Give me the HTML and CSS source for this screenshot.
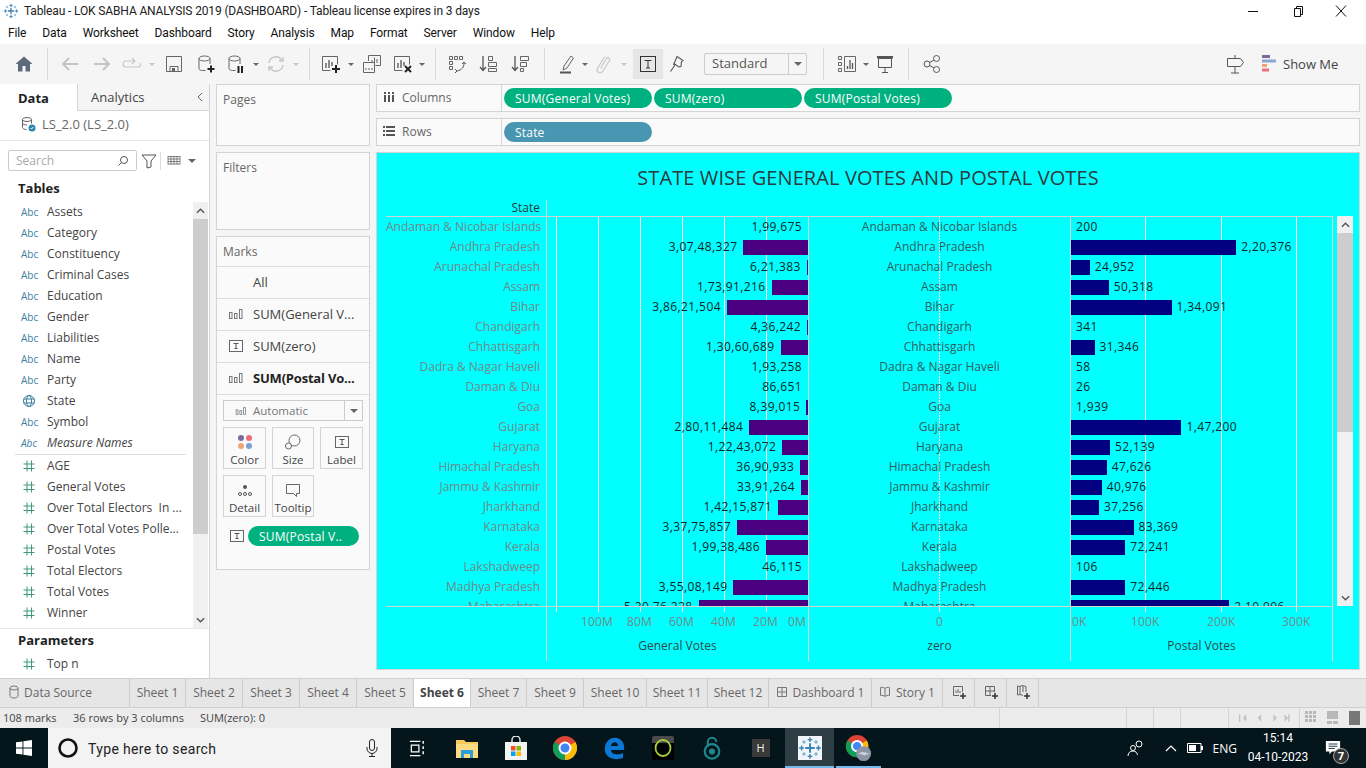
FILE: index.html
```html
<!DOCTYPE html>
<html lang="en">
<head>
    <meta charset="UTF-8">
    <meta name="viewport" content="width=device-width, initial-scale=1.0">
    <title>Tableau - LOK SABHA ANALYSIS 2019 (DASHBOARD)</title>
    <link rel="stylesheet" href="styles.css">
</head>
<body>
    <svg class="defs" aria-hidden="true">
        <symbol id="i-logo" viewBox="0 0 20 20">
            <g stroke="#3b83b5" stroke-width="1.2" fill="none">
                <path d="M10 6v8M6 10h8" stroke-width="1.6"/>
                <path d="M10 1v4M8 3h4M10 15v4M8 17h4M1 10h4M3 8v4M15 10h4M17 8v4"/>
                <path d="M5 3.5v3M3.5 5h3M15 3.5v3M13.500 5h3M5 13.500v3M3.500 15h3M15 13.500v3M13.500 15h3" stroke="#7fb2d4"/>
            </g>
        </symbol>
        <symbol id="i-hash" viewBox="0 0 14 14">
            <path d="M5 1.500v11M9.500 1.500v11M1.500 5h11M1.500 9.500h11" stroke="#3c9a7b" stroke-width="1" fill="none"/>
        </symbol>
        <symbol id="i-globe" viewBox="0 0 14 14">
            <g stroke="#3c7f9f" fill="none">
                <circle cx="7" cy="7" r="5.500"/>
                <ellipse cx="7" cy="7" rx="2.500" ry="5.500"/>
                <path d="M1.500 5h11M1.500 9h11"/>
            </g>
        </symbol>
        <symbol id="i-bars" viewBox="0 0 16 14">
            <g fill="none" stroke="#777">
                <rect x="1.500" y="5.500" width="2.500" height="6"/>
                <rect x="6.500" y="6.500" width="2.500" height="5"/>
                <rect x="11.500" y="2.500" width="2.500" height="9"/>
            </g>
        </symbol>
        <symbol id="i-textbox" viewBox="0 0 16 14">
            <rect x="1.500" y="1.500" width="13" height="11" fill="none" stroke="#666"/>
            <path d="M5.500 4.500h5M8 4.500v5M6.500 9.500h3" stroke="#555" fill="none"/>
        </symbol>
    </svg>

    <div class="titlebar">
        <svg class="title-logo"><use href="#i-logo"></use></svg>
        <span class="title-text">Tableau - LOK SABHA ANALYSIS 2019 (DASHBOARD) - Tableau license expires in 3 days</span>
        <div class="win-btns">
            <svg class="win-btn" viewBox="0 0 12 12"><path d="M1 6.500h10" stroke="#111"/></svg>
            <svg class="win-btn" viewBox="0 0 12 12"><path d="M3.500 3.500h6v8h-6zM5.500 3.500v-2h6v8h-2" fill="none" stroke="#111"/></svg>
            <svg class="win-btn" viewBox="0 0 12 12"><path d="M1 .5l10 11M11 .5L1 11.500" stroke="#111" fill="none"/></svg>
        </div>
    </div>

    <div class="menubar">
        <span>File</span><span>Data</span><span>Worksheet</span><span>Dashboard</span><span>Story</span><span>Analysis</span><span>Map</span><span>Format</span><span>Server</span><span>Window</span><span>Help</span>
    </div>

    <div class="toolbar">
        <div class="tb w32 ml8"><svg viewBox="0 0 20 20"><path d="M1.500 10L10 2.500 18.500 10H16v7.500h-4.500V12h-3v5.500H4V10z" fill="#5d6a7a"/></svg></div>
        <i class="tb-sep ml7"></i>
        <div class="tb w32 ml6"><svg viewBox="0 0 20 20"><path d="M18 10H3M9 4l-6 6 6 6" fill="none" stroke="#c4c4c4" stroke-width="2"/></svg></div>
        <div class="tb w32"><svg viewBox="0 0 20 20"><path d="M2 10h15M11 4l6 6-6 6" fill="none" stroke="#c4c4c4" stroke-width="2"/></svg></div>
        <div class="tb w28"><svg viewBox="0 0 20 20"><path d="M12 7H4a2.500 2.500 0 0 0 0 6h12a2.500 2.500 0 0 0 2-4M10 4l3 3-3 3" fill="none" stroke="#c8c8c8" stroke-width="1.200"/></svg></div>
        <div class="tb-arrow off"></div>
        <div class="tb w32"><svg viewBox="0 0 20 20"><path d="M2.500 2.500h15v15h-15zM6 17.500v-5h8v5" fill="none" stroke="#666"/><rect x="8" y="14" width="3" height="3" fill="#666"/></svg></div>
        <div class="tb w32"><svg viewBox="0 0 20 20"><path d="M3 4.500v10c0 1.500 2 2 3.500 2h3M14 4.500V10" fill="none" stroke="#666"/><ellipse cx="8.500" cy="4.500" rx="5.500" ry="2.500" fill="none" stroke="#666"/><path d="M15 11.500v7M11.500 15h7" stroke="#222" stroke-width="2"/></svg></div>
        <div class="tb w28"><svg viewBox="0 0 20 20"><path d="M3 4.500v10c0 1.500 2 2 3.500 2h3M14 4.500V10" fill="none" stroke="#666"/><ellipse cx="8.500" cy="4.500" rx="5.500" ry="2.500" fill="none" stroke="#666"/><path d="M12.500 12v7M16 12v7" stroke="#222" stroke-width="2"/></svg></div>
        <div class="tb-arrow"></div>
        <div class="tb w28"><svg viewBox="0 0 20 20"><path d="M3 9a7 7 0 0 1 12-4l2 2M17 11a7 7 0 0 1-12 4l-2-2M17 3v4h-4M3 17v-4h4" fill="none" stroke="#c4c4c4" stroke-width="1.300"/></svg></div>
        <div class="tb-arrow off"></div>
        <i class="tb-sep ml7"></i>
        <div class="tb w30 ml6"><svg viewBox="0 0 20 20"><path d="M9.500 16.500h-8v-14h15v8" fill="none" stroke="#666"/><path d="M5 14V9M8 14V6M11 12V8" stroke="#555" stroke-width="1.300"/><path d="M15 11v8M11 15h8" stroke="#222" stroke-width="2"/></svg></div>
        <div class="tb-arrow w10"></div>
        <div class="tb w32"><svg viewBox="0 0 20 20"><path d="M6.500 7V1.500h12v10h-5M1.500 8.500h11v10h-11z" fill="none" stroke="#666"/><path d="M10 9V6M12.500 9V3.500M15 9V5M4 16v-2M7 16v-2M10 16v-2" stroke="#666"/></svg></div>
        <div class="tb w29"><svg viewBox="0 0 20 20"><path d="M9.500 16.500h-8v-14h15v8" fill="none" stroke="#666"/><path d="M5 14V9M8 14V6M11 12V8" stroke="#555" stroke-width="1.300"/><path d="M12 12l6 6M18 12l-6 6" stroke="#222" stroke-width="2"/></svg></div>
        <div class="tb-arrow w10"></div>
        <i class="tb-sep ml8"></i>
        <div class="tb w30 ml6"><svg viewBox="0 0 20 20"><path d="M2.500 2.500h3v3h-3zM7.500 2.500h3v3h-3zM12.500 2.500h3v3h-3zM2.500 7.500h3v3h-3zM2.500 12.500h3v3h-3z" fill="none" stroke="#666"/><path d="M17 9c0 4-2 7-7 8M8 15l2 2-2 2M15 10l2-2 2 2" fill="none" stroke="#555"/></svg></div>
        <div class="tb w32"><svg viewBox="0 0 20 20"><path d="M5 2v14M2 13l3 3.500L8 13" fill="none" stroke="#555" stroke-width="1.300"/><path d="M10.500 2.500h4v4h-4zM10.500 8.500h8v4h-8zM10.500 14.500h8v3h-8z" fill="none" stroke="#666"/></svg></div>
        <div class="tb w32"><svg viewBox="0 0 20 20"><path d="M5 2v14M2 13l3 3.500L8 13" fill="none" stroke="#555" stroke-width="1.300"/><path d="M10.500 2.500h8v4h-8zM10.500 8.500h6v4h-6zM10.500 14.500h3v3h-3z" fill="none" stroke="#666"/></svg></div>
        <i class="tb-sep ml8"></i>
        <div class="tb w28 ml8"><svg viewBox="0 0 20 20"><path d="M7 12L14 2l2.500 2L10 14l-4 2z" fill="none" stroke="#666"/><path d="M3 18.500h11" stroke="#555" stroke-width="2"/></svg></div>
        <div class="tb-arrow w8"></div>
        <div class="tb w30"><svg viewBox="0 0 20 20"><path d="M6.500 14.500l6-10a1.800 1.800 0 0 1 3.100 1.800l-6.800 11a3 3 0 0 1-5.200-3l7-11.500" fill="none" stroke="#c4c4c4" stroke-width="1.100"/></svg></div>
        <div class="tb-arrow off w10"></div>
        <div class="tb tb-on ml4"><svg viewBox="0 0 20 20"><rect x="2.500" y="2.500" width="15" height="15" fill="none" stroke="#333"/><path d="M6.500 6.500h7M10 6.500v7.500M8 14h4" stroke="#333" fill="none"/></svg></div>
        <div class="tb w28"><svg viewBox="0 0 20 20"><path d="M10 2.500l6 4-1.500 1-.5 5-2 .5-5-3.500-.5 1.500zM8 11l-4.500 6.500" fill="none" stroke="#555" stroke-width="1.100"/></svg></div>
        <div class="fit-select">
            <span class="fit-label">Standard</span>
            <div class="fit-arrow"><i class="caret"></i></div>
        </div>
        <i class="tb-sep ml16"></i>
        <div class="tb w30 ml8"><svg viewBox="0 0 20 20"><path d="M1.500 2.500h3v3h-3zM1.500 8.500h3v3h-3zM1.500 14.500h3v3h-3zM7.500 2.500h11v15h-11z" fill="none" stroke="#666"/><path d="M10.500 15v-3M13 15V6M15.500 15V9" stroke="#555" stroke-width="1.300"/></svg></div>
        <div class="tb-arrow w8"></div>
        <div class="tb w30"><svg viewBox="0 0 20 20"><path d="M3.500 4.500h13v9h-13zM2 2.500h16M10 13.500v5M7 18.500h6" fill="none" stroke="#555"/><path d="M2 3.500h16" stroke="#555" stroke-width="2"/></svg></div>
        <i class="tb-sep ml8"></i>
        <div class="tb w28 ml9"><svg viewBox="0 0 20 20"><circle cx="5" cy="10" r="3" fill="none" stroke="#555"/><circle cx="14.500" cy="4.500" r="3" fill="none" stroke="#555"/><circle cx="14.500" cy="15.500" r="3" fill="none" stroke="#555"/><path d="M7.500 8.500l4.500-2.500M7.500 11.500l4.500 2.500" stroke="#555"/></svg></div>
        <div class="tb-right">
            <div class="tb w32"><svg viewBox="0 0 20 20"><path d="M10 1v3M10 13v6M6 19h8M2.500 4.500h13l3 4-3 4h-13z" fill="none" stroke="#555"/></svg></div>
            <div class="showme">
                <svg class="showme-icon" viewBox="0 0 14 18">
                    <rect x="0" y="0" width="8" height="3" fill="#7b6a9c"/>
                    <rect x="0" y="4.500" width="14" height="3" fill="#8ba7d1"/>
                    <rect x="0" y="9" width="5" height="3" fill="#f0a474"/>
                    <rect x="0" y="13.500" width="7" height="3" fill="#f06d7c"/>
                </svg>
                <span>Show Me</span>
            </div>
        </div>
    </div>

    <div class="main">
        <aside class="data-pane">
            <div class="pane-tabs">
                <div class="pane-tab active">Data</div>
                <div class="pane-tab">Analytics<svg class="collapse" viewBox="0 0 6 10"><path d="M5 1L1 5l4 4" fill="none" stroke="#666"/></svg></div>
            </div>
            <div class="source-row">
                <svg class="source-icon" viewBox="0 0 16 16">
                    <ellipse cx="7" cy="3.500" rx="4.500" ry="2" fill="none" stroke="#666"/>
                    <path d="M2.500 3.500v8c0 1 2 2 4 2M11.500 3.500v4M2.500 7c0 1 2 2 4.500 2" fill="none" stroke="#666"/>
                    <circle cx="12" cy="12" r="3.500" fill="#2a86ac"/>
                    <path d="M10.500 12l1 1 2-2" stroke="#fff" fill="none"/>
                </svg>
                <span>LS_2.0 (LS_2.0)</span>
            </div>
            <div class="search-row">
                <div class="search-box">
                    <span>Search</span>
                    <svg viewBox="0 0 12 12"><circle cx="7" cy="5" r="3.500" fill="none" stroke="#555"/><path d="M4.500 7.500L1.500 10.500" stroke="#555"/></svg>
                </div>
                <svg class="filter-icon" viewBox="0 0 16 16"><path d="M1 2h14l-5 6v6l-4 1V8z" fill="none" stroke="#555"/></svg>
                <i class="search-sep"></i>
                <svg class="list-icon" viewBox="0 0 14 12"><path d="M1 1.500h12M1 4h12M1 6.500h12M1 9h12M1 1v8.500M4 1v8.500M7 1v8.500M10 1v8.500M13 1v8.500" stroke="#666" stroke-width=".8" fill="none"/></svg>
                <i class="caret"></i>
            </div>
            <div class="section-head">Tables</div>
            <div class="field-scroll">
                <div class="field-list">
                    <div class="field"><span class="abc">Abc</span>Assets</div>
                    <div class="field"><span class="abc">Abc</span>Category</div>
                    <div class="field"><span class="abc">Abc</span>Constituency</div>
                    <div class="field"><span class="abc">Abc</span>Criminal Cases</div>
                    <div class="field"><span class="abc">Abc</span>Education</div>
                    <div class="field"><span class="abc">Abc</span>Gender</div>
                    <div class="field"><span class="abc">Abc</span>Liabilities</div>
                    <div class="field"><span class="abc">Abc</span>Name</div>
                    <div class="field"><span class="abc">Abc</span>Party</div>
                    <div class="field"><span class="abc"><svg class="field-icon"><use href="#i-globe"></use></svg></span>State</div>
                    <div class="field"><span class="abc">Abc</span>Symbol</div>
                    <div class="field italic"><span class="abc">Abc</span>Measure Names</div>
                    <div class="field-rule"></div>
                    <div class="field"><span class="abc"><svg class="field-icon"><use href="#i-hash"></use></svg></span>AGE</div>
                    <div class="field"><span class="abc"><svg class="field-icon"><use href="#i-hash"></use></svg></span>General Votes</div>
                    <div class="field"><span class="abc"><svg class="field-icon"><use href="#i-hash"></use></svg></span>Over Total Electors&nbsp; In ...</div>
                    <div class="field"><span class="abc"><svg class="field-icon"><use href="#i-hash"></use></svg></span>Over Total Votes Polle...</div>
                    <div class="field"><span class="abc"><svg class="field-icon"><use href="#i-hash"></use></svg></span>Postal Votes</div>
                    <div class="field"><span class="abc"><svg class="field-icon"><use href="#i-hash"></use></svg></span>Total Electors</div>
                    <div class="field"><span class="abc"><svg class="field-icon"><use href="#i-hash"></use></svg></span>Total Votes</div>
                    <div class="field"><span class="abc"><svg class="field-icon"><use href="#i-hash"></use></svg></span>Winner</div>
                </div>
                <div class="scroll field-bar">
                    <div class="scroll-btn"><svg viewBox="0 0 10 6"><path d="M1 5l4-4 4 4" fill="none" stroke="#555" stroke-width="1.600"/></svg></div>
                    <div class="scroll-thumb"></div>
                    <div class="scroll-btn end"><svg viewBox="0 0 10 6"><path d="M1 1l4 4 4-4" fill="none" stroke="#555" stroke-width="1.600"/></svg></div>
                </div>
            </div>
            <div class="section-head params">Parameters</div>
            <div class="field"><span class="abc"><svg class="field-icon"><use href="#i-hash"></use></svg></span>Top n</div>
        </aside>

        <div class="cards">
            <div class="card pages">Pages</div>
            <div class="card filters">Filters</div>
            <div class="card marks">
                <div class="marks-head">Marks</div>
                <div class="marks-row"><span class="marks-ic"></span>All</div>
                <div class="marks-row"><svg class="marks-ic"><use href="#i-bars"></use></svg>SUM(General V...</div>
                <div class="marks-row"><svg class="marks-ic"><use href="#i-textbox"></use></svg>SUM(zero)</div>
                <div class="marks-row bold"><svg class="marks-ic"><use href="#i-bars"></use></svg>SUM(Postal Vo...</div>
                <div class="marks-type">
                    <svg class="type-ic"><use href="#i-bars"></use></svg>
                    <span>Automatic</span>
                    <div class="type-arrow"><i class="caret"></i></div>
                </div>
                <div class="marks-grid">
                    <div class="mark-card">
                        <svg viewBox="0 0 16 16"><circle cx="4" cy="4" r="3" fill="#7b6a9c"/><circle cx="12" cy="4" r="3" fill="#ef6a7a"/><circle cx="4" cy="12" r="3" fill="#f0a474"/><circle cx="12" cy="12" r="3" fill="#7f9fd0"/></svg>
                        <span>Color</span>
                    </div>
                    <div class="mark-card">
                        <svg viewBox="0 0 16 16"><circle cx="9.500" cy="6.500" r="5.500" fill="none" stroke="#666"/><circle cx="3.500" cy="12" r="3" fill="#fafafa" stroke="#666"/></svg>
                        <span>Size</span>
                    </div>
                    <div class="mark-card">
                        <svg><use href="#i-textbox"></use></svg>
                        <span>Label</span>
                    </div>
                    <div class="mark-card">
                        <svg viewBox="0 0 16 16"><circle cx="8" cy="5" r="2" fill="#555"/><circle cx="3" cy="12" r="1.500" fill="none" stroke="#555"/><circle cx="8" cy="12" r="1.500" fill="none" stroke="#555"/><circle cx="13" cy="12" r="1.500" fill="none" stroke="#555"/></svg>
                        <span>Detail</span>
                    </div>
                    <div class="mark-card">
                        <svg viewBox="0 0 16 16"><path d="M1.500 2.500h13v9h-3v3l-3-3h-7z" fill="none" stroke="#666"/></svg>
                        <span>Tooltip</span>
                    </div>
                </div>
                <div class="marks-pill-row">
                    <svg class="pill-ic"><use href="#i-textbox"></use></svg>
                    <div class="pill pill-green pill-small">SUM(Postal V..</div>
                </div>
            </div>
        </div>

        <div class="work">
            <div class="shelf">
                <div class="shelf-label">
                    <svg viewBox="0 0 12 12"><path d="M2 1v10M6 1v10M10 1v10" stroke="#555" stroke-width="2" stroke-dasharray="2 1 9"/></svg>
                    <span>Columns</span>
                </div>
                <div class="shelf-pills">
                    <div class="pill pill-green">SUM(General Votes)</div>
                    <div class="pill pill-green">SUM(zero)</div>
                    <div class="pill pill-green">SUM(Postal Votes)</div>
                </div>
            </div>
            <div class="shelf">
                <div class="shelf-label">
                    <svg viewBox="0 0 12 12"><path d="M0 2h12M0 6h12M0 10h12" stroke="#555" stroke-width="2" stroke-dasharray="2 1 9"/></svg>
                    <span>Rows</span>
                </div>
                <div class="shelf-pills">
                    <div class="pill pill-blue">State</div>
                </div>
            </div>

            <div class="viz">
                <h1 class="viz-title">STATE WISE GENERAL VOTES AND POSTAL VOTES</h1>
                <div class="viz-head"><div class="state head-state">State</div></div>
                <div class="viz-body">
                    <div class="rows">
                        <div class="row"><div class="state">Andaman &amp; Nicobar Islands</div><div class="gen"><span class="bar bar-gen" style="width:0px"></span><span class="val">1,99,675</span></div><div class="zero">Andaman &amp; Nicobar Islands</div><div class="post"><span class="bar bar-post" style="width:0px"></span><span class="val">200</span></div></div>
                        <div class="row"><div class="state">Andhra Pradesh</div><div class="gen"><span class="bar bar-gen" style="width:64.6px"></span><span class="val">3,07,48,327</span></div><div class="zero">Andhra Pradesh</div><div class="post"><span class="bar bar-post" style="width:165.3px"></span><span class="val">2,20,376</span></div></div>
                        <div class="row"><div class="state">Arunachal Pradesh</div><div class="gen"><span class="bar bar-gen" style="width:1.3px"></span><span class="val">6,21,383</span></div><div class="zero">Arunachal Pradesh</div><div class="post"><span class="bar bar-post" style="width:18.7px"></span><span class="val">24,952</span></div></div>
                        <div class="row"><div class="state">Assam</div><div class="gen"><span class="bar bar-gen" style="width:36.5px"></span><span class="val">1,73,91,216</span></div><div class="zero">Assam</div><div class="post"><span class="bar bar-post" style="width:37.7px"></span><span class="val">50,318</span></div></div>
                        <div class="row"><div class="state">Bihar</div><div class="gen"><span class="bar bar-gen" style="width:81.1px"></span><span class="val">3,86,21,504</span></div><div class="zero">Bihar</div><div class="post"><span class="bar bar-post" style="width:100.6px"></span><span class="val">1,34,091</span></div></div>
                        <div class="row"><div class="state">Chandigarh</div><div class="gen"><span class="bar bar-gen" style="width:0.9px"></span><span class="val">4,36,242</span></div><div class="zero">Chandigarh</div><div class="post"><span class="bar bar-post" style="width:0px"></span><span class="val">341</span></div></div>
                        <div class="row"><div class="state">Chhattisgarh</div><div class="gen"><span class="bar bar-gen" style="width:27.4px"></span><span class="val">1,30,60,689</span></div><div class="zero">Chhattisgarh</div><div class="post"><span class="bar bar-post" style="width:23.5px"></span><span class="val">31,346</span></div></div>
                        <div class="row"><div class="state">Dadra &amp; Nagar Haveli</div><div class="gen"><span class="bar bar-gen" style="width:0px"></span><span class="val">1,93,258</span></div><div class="zero">Dadra &amp; Nagar Haveli</div><div class="post"><span class="bar bar-post" style="width:0px"></span><span class="val">58</span></div></div>
                        <div class="row"><div class="state">Daman &amp; Diu</div><div class="gen"><span class="bar bar-gen" style="width:0px"></span><span class="val">86,651</span></div><div class="zero">Daman &amp; Diu</div><div class="post"><span class="bar bar-post" style="width:0px"></span><span class="val">26</span></div></div>
                        <div class="row"><div class="state">Goa</div><div class="gen"><span class="bar bar-gen" style="width:1.8px"></span><span class="val">8,39,015</span></div><div class="zero">Goa</div><div class="post"><span class="bar bar-post" style="width:0px"></span><span class="val">1,939</span></div></div>
                        <div class="row"><div class="state">Gujarat</div><div class="gen"><span class="bar bar-gen" style="width:58.8px"></span><span class="val">2,80,11,484</span></div><div class="zero">Gujarat</div><div class="post"><span class="bar bar-post" style="width:110.4px"></span><span class="val">1,47,200</span></div></div>
                        <div class="row"><div class="state">Haryana</div><div class="gen"><span class="bar bar-gen" style="width:25.7px"></span><span class="val">1,22,43,072</span></div><div class="zero">Haryana</div><div class="post"><span class="bar bar-post" style="width:39.1px"></span><span class="val">52,139</span></div></div>
                        <div class="row"><div class="state">Himachal Pradesh</div><div class="gen"><span class="bar bar-gen" style="width:7.8px"></span><span class="val">36,90,933</span></div><div class="zero">Himachal Pradesh</div><div class="post"><span class="bar bar-post" style="width:35.7px"></span><span class="val">47,626</span></div></div>
                        <div class="row"><div class="state">Jammu &amp; Kashmir</div><div class="gen"><span class="bar bar-gen" style="width:7.1px"></span><span class="val">33,91,264</span></div><div class="zero">Jammu &amp; Kashmir</div><div class="post"><span class="bar bar-post" style="width:30.7px"></span><span class="val">40,976</span></div></div>
                        <div class="row"><div class="state">Jharkhand</div><div class="gen"><span class="bar bar-gen" style="width:29.9px"></span><span class="val">1,42,15,871</span></div><div class="zero">Jharkhand</div><div class="post"><span class="bar bar-post" style="width:27.9px"></span><span class="val">37,256</span></div></div>
                        <div class="row"><div class="state">Karnataka</div><div class="gen"><span class="bar bar-gen" style="width:70.9px"></span><span class="val">3,37,75,857</span></div><div class="zero">Karnataka</div><div class="post"><span class="bar bar-post" style="width:62.5px"></span><span class="val">83,369</span></div></div>
                        <div class="row"><div class="state">Kerala</div><div class="gen"><span class="bar bar-gen" style="width:41.9px"></span><span class="val">1,99,38,486</span></div><div class="zero">Kerala</div><div class="post"><span class="bar bar-post" style="width:54.2px"></span><span class="val">72,241</span></div></div>
                        <div class="row"><div class="state">Lakshadweep</div><div class="gen"><span class="bar bar-gen" style="width:0px"></span><span class="val">46,115</span></div><div class="zero">Lakshadweep</div><div class="post"><span class="bar bar-post" style="width:0px"></span><span class="val">106</span></div></div>
                        <div class="row"><div class="state">Madhya Pradesh</div><div class="gen"><span class="bar bar-gen" style="width:74.6px"></span><span class="val">3,55,08,149</span></div><div class="zero">Madhya Pradesh</div><div class="post"><span class="bar bar-post" style="width:54.3px"></span><span class="val">72,446</span></div></div>
                        <div class="row"><div class="state">Maharashtra</div><div class="gen"><span class="bar bar-gen" style="width:109.4px"></span><span class="val">5,20,76,228</span></div><div class="zero">Maharashtra</div><div class="post"><span class="bar bar-post" style="width:158.2px"></span><span class="val">2,10,996</span></div></div>
                    </div>
                    <div class="scroll viz-bar">
                        <div class="scroll-btn"><svg viewBox="0 0 10 6"><path d="M1 5l4-4 4 4" fill="none" stroke="#555" stroke-width="1.600"/></svg></div>
                        <div class="scroll-thumb"></div>
                        <div class="scroll-btn end"><svg viewBox="0 0 10 6"><path d="M1 1l4 4 4-4" fill="none" stroke="#555" stroke-width="1.600"/></svg></div>
                    </div>
                </div>
                <div class="viz-axis">
                    <div class="axis-blank"></div>
                    <div class="axis-cell gen-axis">
                        <span>100M</span><span>80M</span><span>60M</span><span>40M</span><span>20M</span><span>0M</span>
                        <b>General Votes</b>
                    </div>
                    <div class="axis-cell zero-axis">
                        <span>0</span>
                        <b>zero</b>
                    </div>
                    <div class="axis-cell post-axis">
                        <span>0K</span><span>100K</span><span>200K</span><span>300K</span>
                        <b>Postal Votes</b>
                    </div>
                </div>
            </div>
        </div>
    </div>

    <div class="tabs">
        <div class="tab tab-source">
            <svg viewBox="0 0 10 14"><ellipse cx="5" cy="3" rx="4" ry="2" fill="none" stroke="#777"/><path d="M1 3v8c0 1 2 2 4 2s4-1 4-2V3" fill="none" stroke="#777"/></svg>
            Data Source
        </div>
        <div class="tab w56">Sheet 1</div>
        <div class="tab w57">Sheet 2</div>
        <div class="tab w57">Sheet 3</div>
        <div class="tab w57">Sheet 4</div>
        <div class="tab w57">Sheet 5</div>
        <div class="tab w57 tab-on">Sheet 6</div>
        <div class="tab w56">Sheet 7</div>
        <div class="tab w57">Sheet 9</div>
        <div class="tab w63">Sheet 10</div>
        <div class="tab w61">Sheet 11</div>
        <div class="tab w61">Sheet 12</div>
        <div class="tab w103">
            <svg viewBox="0 0 12 12"><path d="M1.500 1.500h9v9h-9zM6 1.500v9M1.500 6h9" fill="none" stroke="#777"/></svg>
            Dashboard 1
        </div>
        <div class="tab w71">
            <svg viewBox="0 0 12 12"><path d="M6 2.500C5 1.500 3 1 1.500 1.500v8C3 9 5 9.500 6 10.500c1-1 3-1.500 4.500-1v-8C9 1 7 1.500 6 2.500zM6 2.500v8" fill="none" stroke="#777"/></svg>
            Story 1
        </div>
        <div class="tab w32 tab-add"><svg viewBox="0 0 16 16"><path d="M8 11.500H2.500v-9h9V8M5 9V6.500M7 9V5M9 9V7" fill="none" stroke="#666"/><path d="M12 9v6M9 12h6" stroke="#333" stroke-width="1.500"/></svg></div>
        <div class="tab w32 tab-add"><svg viewBox="0 0 16 16"><path d="M8 11.500H2.500v-9h9V8M7 2.500v9M2.500 7h9" fill="none" stroke="#666"/><path d="M12 9v6M9 12h6" stroke="#333" stroke-width="1.500"/></svg></div>
        <div class="tab w32 tab-add"><svg viewBox="0 0 16 16"><path d="M8 11.500l-3-1-2.500.5v-9l2.500.5 2-1 4 1V8M5 2v8.500M8 2v6" fill="none" stroke="#666"/><path d="M12 9v6M9 12h6" stroke="#333" stroke-width="1.500"/></svg></div>
    </div>

    <div class="status">
        <span class="stat-marks">108 marks</span>
        <span class="stat-rows">36 rows by 3 columns</span>
        <span class="stat-sum">SUM(zero): 0</span>
        <div class="stat-cells">
            <i class="cell c127"></i><i class="cell c27"></i><i class="cell c27"></i><i class="cell c48"></i>
            <div class="cell pager">
                <svg viewBox="0 0 56 10"><g fill="#c4c4c4"><path d="M5 5l4-4v8zM1 1h1.500v8H1zM21 5l4-4v8zM38 1l4 4-4 4zM54 5l-4-4v8zM54 1h1.500v8H54z"/></g></svg>
            </div>
            <div class="cell views">
                <svg viewBox="0 0 56 14">
                    <g fill="#b8b8b8"><rect x="0" y="0" width="3" height="3"/><rect x="4" y="0" width="3" height="3"/><rect x="8" y="0" width="3" height="3"/><rect x="0" y="4" width="3" height="3"/><rect x="4" y="4" width="3" height="3"/><rect x="8" y="4" width="3" height="3"/><rect x="0" y="8" width="3" height="3"/><rect x="4" y="8" width="3" height="3"/><rect x="8" y="8" width="3" height="3"/></g>
                    <rect x="22" y="0" width="11" height="8" fill="#b8b8b8"/><rect x="22" y="10" width="5" height="3" fill="#b8b8b8"/><rect x="28" y="10" width="5" height="3" fill="#b8b8b8"/>
                    <rect x="44" y="0" width="11" height="14" fill="#777"/>
                </svg>
            </div>
        </div>
    </div>

    <div class="taskbar">
        <div class="start"><svg viewBox="0 0 16 16"><path d="M0 2.300L6.500 1.400v6.200H0zM7.400 1.300L16 0v7.600H7.400zM0 8.400h6.500v6.200L0 13.700zM7.400 8.400H16V16l-8.600-1.300z" fill="#fff"/></svg></div>
        <div class="task-search">
            <svg class="cortana" viewBox="0 0 22 22"><circle cx="11" cy="11" r="8.500" fill="none" stroke="#111" stroke-width="2.600"/></svg>
            <span>Type here to search</span>
            <svg class="mic" viewBox="0 0 12 18"><rect x="3.500" y=".5" width="5" height="11" rx="2.500" fill="none" stroke="#222"/><path d="M1 8v1.500a5 5 0 0 0 10 0V8M6 14.500v3M3 17.500h6" fill="none" stroke="#222"/></svg>
        </div>
        <div class="task-app"><svg class="taskview" viewBox="0 0 20 20"><path d="M2 2.500h11M2 17.500h11M3.500 6.500h8v7h-8z" fill="none" stroke="#fff" stroke-width="1.300"/><path d="M16 2v3M16 7.500v3M16 13v3" stroke="#fff" stroke-width="1.500"/></svg></div>
        <div class="task-app"><svg viewBox="0 0 24 22"><path d="M1 3h8l2 2h12v16H1z" fill="#f6c95b"/><path d="M1 7h22v14H1z" fill="#fbdc84"/><path d="M6 21v-8h12v8h-3v-4H9v4z" fill="#2d9fd8"/></svg></div>
        <div class="task-app"><svg viewBox="0 0 22 24"><path d="M7 7V4a4 4 0 0 1 8 0v3" fill="none" stroke="#eee" stroke-width="1.400"/><rect x="0" y="6" width="22" height="18" fill="#f3f3f3"/><rect x="6" y="10" width="4.500" height="4.500" fill="#f25022"/><rect x="11.500" y="10" width="4.500" height="4.500" fill="#7fba00"/><rect x="6" y="15.500" width="4.500" height="4.500" fill="#00a4ef"/><rect x="11.500" y="15.500" width="4.500" height="4.500" fill="#ffb900"/></svg></div>
        <div class="task-app"><svg viewBox="0 0 24 24"><circle cx="12" cy="12" r="12" fill="#db4437"/><path d="M12 12L22.400 6A12 12 0 0 1 12 24z" fill="#fbbc05"/><path d="M12 12v12A12 12 0 0 1 1.600 6z" fill="#0f9d58"/><circle cx="12" cy="12" r="5.500" fill="#4285f4" stroke="#fff" stroke-width="2"/></svg></div>
        <div class="task-app"><svg viewBox="0 0 24 24"><path d="M3 11C4 4 10 1 15 2c5 1 8 6 7 12H9c0 4 6 6 12 3v5c-8 3-17 0-18-7-.5-1.500 0-3 0-4zm6-1h7c0-5-6-5-7 0z" fill="#0a78d4"/></svg></div>
        <div class="task-app"><svg class="ring-app" viewBox="0 0 22 24"><rect width="22" height="24" rx="2" fill="#000"/><path d="M0 2a2 2 0 0 1 2-2h18a2 2 0 0 1 2 2v5H0z" fill="#4a4a4a"/><ellipse cx="11" cy="12" rx="7.500" ry="8" fill="none" stroke="#a6ce39" stroke-width="1.800"/></svg></div>
        <div class="task-app"><svg viewBox="0 0 20 28"><path d="M5 12V7a5 5 0 0 1 10 0" fill="none" stroke="#1a8a93" stroke-width="2.200"/><circle cx="10" cy="18" r="8.500" fill="none" stroke="#1a8a93" stroke-width="2.500"/><circle cx="10" cy="18" r="3.500" fill="#1a8a93"/></svg></div>
        <div class="task-app"><div class="h-icon">H</div></div>
        <div class="task-app task-on underline"><svg class="tableau-tile" viewBox="0 0 20 20"><rect x="-1" y="-1" width="22" height="22" fill="#f2f6f8"/><use href="#i-logo" width="20" height="20"></use></svg></div>
        <div class="task-app underline chrome-two"><svg viewBox="0 0 30 30"><circle cx="13" cy="13" r="12" fill="#db4437"/><path d="M13 13L23.400 7A12 12 0 0 1 13 25z" fill="#fbbc05"/><path d="M13 13v12A12 12 0 0 1 2.600 7z" fill="#0f9d58"/><circle cx="13" cy="13" r="5.500" fill="#4285f4" stroke="#fff" stroke-width="2"/><circle cx="20" cy="21" r="8" fill="#8b95a6"/><path d="M14 21l5-2 7 2-5 2z" fill="#c9ced6"/></svg></div>
        <div class="tray">
            <svg class="tray-person" viewBox="0 0 18 18"><circle cx="12" cy="5" r="3" fill="none" stroke="#fff"/><circle cx="6" cy="9" r="2.500" fill="none" stroke="#fff"/><path d="M1 17c0-3 2-5 5-5s4 2 4.500 4" fill="none" stroke="#fff"/></svg>
            <svg class="tray-caret" viewBox="0 0 12 8"><path d="M1 7l5-5 5 5" fill="none" stroke="#fff" stroke-width="1.200"/></svg>
            <svg class="tray-batt" viewBox="0 0 16 10"><path d="M.5.5h13.500v9H.5z" fill="none" stroke="#fff"/><rect x="2" y="2" width="7" height="6" fill="#fff"/><rect x="14" y="3" width="2" height="4" fill="#fff"/></svg>
            <span class="tray-lang">ENG</span>
            <div class="clock"><span>15:14</span><span>04-10-2023</span></div>
            <div class="notify">
                <svg viewBox="0 0 18 18"><path d="M1 1h16v12H8l-3 3v-3H1z" fill="#fff"/><path d="M4 4.500h10M4 7h10M4 9.500h7" stroke="#123" stroke-width="1"/></svg>
                <span class="notify-badge">7</span>
            </div>
        </div>
    </div>
</body>
</html>
```

FILE: styles.css
```css
* {
    box-sizing: border-box;
}

html, body {
    margin: 0;
    padding: 0;
    height: 768px;
    overflow: hidden;
}

body {
    font-family: "Open Sans", "Noto Sans", sans-serif;
    font-size: 12px;
    color: #333;
    background-color: #f5f5f5;
    display: flex;
    flex-direction: column;
}

svg {
    display: block;
}

.defs {
    width: 0;
    height: 0;
    position: absolute;
}

/* window chrome */
.titlebar {
    height: 22px;
    background-color: #fff;
    display: flex;
    align-items: center;
    padding-left: 3px;
    color: #222;
}

.title-logo {
    width: 16px;
    height: 16px;
    margin-right: 5px;
}

.title-text {
    font-family: "Roboto", sans-serif;
    letter-spacing: -0.14px;
}

.win-btns {
    margin-left: auto;
    display: flex;
    align-items: center;
}

.win-btn {
    width: 12px;
    height: 12px;
    margin-right: 32px;
}

.win-btn:last-child {
    margin-right: 19px;
}

.menubar {
    height: 22px;
    background-color: #fff;
    display: flex;
    align-items: center;
    padding-left: 8px;
    gap: 16px;
    color: #111;
    font-family: "Roboto", sans-serif;
    letter-spacing: -0.12px;
}

/* toolbar */
.toolbar {
    height: 40px;
    background-color: #f5f5f5;
    display: flex;
    align-items: center;
}

.tb {
    height: 30px;
    display: flex;
    align-items: center;
    justify-content: center;
    flex: none;
}

.tb svg {
    width: 20px;
    height: 20px;
}

.tb-on {
    width: 30px;
    background-color: #e6e6e6;
}

.w28 { width: 28px; }
.w29 { width: 29px; }
.w30 { width: 30px; }
.w32 { width: 32px; }

.ml4 { margin-left: 4px; }
.ml6 { margin-left: 6px; }
.ml7 { margin-left: 7px; }
.ml8 { margin-left: 8px; }
.ml9 { margin-left: 9px; }
.ml16 { margin-left: 16px; }

.tb-sep {
    width: 1px;
    height: 32px;
    background-color: #d8d8d8;
    flex: none;
}

.tb-arrow {
    width: 12px;
    flex: none;
    display: flex;
    justify-content: center;
}

.tb-arrow.w10 { width: 10px; }
.tb-arrow.w8 { width: 8px; }

.tb-arrow::before {
    content: "";
    border-top: 3px solid #666;
    border-left: 3px solid transparent;
    border-right: 3px solid transparent;
}

.tb-arrow.off::before {
    border-top-color: #c4c4c4;
}

.caret {
    display: block;
    border-top: 4px solid #666;
    border-left: 4px solid transparent;
    border-right: 4px solid transparent;
}

.fit-select {
    width: 103px;
    height: 22px;
    margin-left: 13px;
    border: 1px solid #ccc;
    border-radius: 2px;
    display: flex;
    align-items: center;
    flex: none;
    color: #555;
    font-size: 13px;
}

.fit-label {
    flex: 1;
    padding: 0 0 2px 7px;
}

.fit-arrow {
    width: 18px;
    height: 100%;
    border-left: 1px solid #ccc;
    display: flex;
    align-items: center;
    justify-content: center;
}

.tb-right {
    margin-left: auto;
    display: flex;
    align-items: center;
}

.showme {
    display: flex;
    align-items: center;
    width: 115px;
    padding-left: 11px;
    font-size: 13px;
    color: #444;
}

.showme-icon {
    width: 14px;
    height: 18px;
    margin-right: 7px;
}

/* main area */
.main {
    height: 594px;
    display: flex;
}

.data-pane {
    width: 210px;
    background-color: #fff;
    border-right: 1px solid #d4d4d4;
    flex: none;
}

.pane-tabs {
    height: 27px;
    display: flex;
}

.pane-tab {
    display: flex;
    align-items: center;
    flex: 1;
    padding-left: 13px;
    font-size: 13px;
    color: #444;
    background-color: #f5f5f5;
    border-left: 1px solid #d4d4d4;
    border-bottom: 1px solid #d4d4d4;
    justify-content: space-between;
    padding-right: 6px;
}

.pane-tab.active {
    flex: none;
    width: 77px;
    padding-left: 18px;
    background-color: #fff;
    font-weight: 700;
    color: #222;
    border: 0;
}

.collapse {
    width: 6px;
    height: 10px;
}

.source-row {
    height: 30px;
    display: flex;
    align-items: center;
    padding: 0 0 3px 20px;
    gap: 6px;
    color: #666;
    font-size: 13px;
    border-bottom: 1px solid #e6e6e6;
}

.source-icon {
    width: 16px;
    height: 16px;
}

.search-row {
    height: 30px;
    padding: 9px 0 0 8px;
    display: flex;
    align-items: center;
}

.search-box {
    width: 129px;
    height: 21px;
    border: 1px solid #ccc;
    border-radius: 2px;
    padding: 0 7px;
    display: flex;
    align-items: center;
    justify-content: space-between;
    color: #aaa;
}

.search-box svg {
    width: 12px;
    height: 12px;
}

.filter-icon {
    width: 16px;
    height: 16px;
    margin-left: 4px;
}

.search-sep {
    width: 1px;
    height: 18px;
    margin-left: 3px;
    background-color: #ddd;
}

.list-icon {
    width: 14px;
    height: 12px;
    margin: 0 7px 0 6px;
}

.section-head {
    height: 31px;
    padding: 8px 0 0 18px;
    font-size: 13px;
    font-weight: 700;
    color: #222;
}

.field-scroll {
    height: 427px;
    display: flex;
    border-bottom: 1px solid #e6e6e6;
}

.field-list {
    width: 193px;
    margin-top: -1px;
}

.field {
    height: 21px;
    display: flex;
    align-items: center;
    color: #444;
}

.field.italic {
    font-style: italic;
}

.abc {
    width: 47px;
    padding-left: 21px;
    font-size: 10px;
    color: #3c7f9f;
    flex: none;
}

.field-icon {
    width: 14px;
    height: 14px;
    margin-left: 1px;
}

.field-rule {
    height: 1px;
    margin: 1px 0 0 15px;
    width: 171px;
    background-color: #ddd;
}

.params {
    height: 24px;
    padding-top: 2px;
}

.scroll {
    display: flex;
    flex-direction: column;
    background-color: #f0f0f0;
}

.field-bar {
    width: 15px;
    height: 426px;
}

.scroll-btn {
    height: 17px;
    display: flex;
    align-items: center;
    justify-content: center;
    flex: none;
}

.scroll-btn svg {
    width: 9px;
    height: 6px;
}

.scroll-btn.end {
    margin-top: auto;
}

.scroll-thumb {
    height: 315px;
    background-color: #cdcdcd;
}

/* shelves and cards */
.cards {
    width: 166px;
    padding: 0 6px;
    flex: none;
    display: flex;
    flex-direction: column;
    gap: 6px;
    align-items: stretch;
}

.card {
    background-color: #fafafa;
    border: 1px solid #d4d4d4;
    padding: 6px;
    color: #666;
}

.pages { height: 62px; }
.filters { height: 78px; }

.marks {
    height: 334px;
    padding: 0;
}

.marks-head {
    height: 30px;
    padding: 6px 6px 0;
    border-bottom: 1px solid #dcdcdc;
}

.marks-row {
    height: 32px;
    display: flex;
    align-items: center;
    padding: 0 0 2px 11px;
    border-bottom: 1px solid #dcdcdc;
    color: #444;
    font-size: 13px;
    white-space: nowrap;
}

.marks-row.bold {
    font-weight: 700;
    color: #222;
    letter-spacing: -0.2px;
}

.marks-ic {
    width: 16px;
    height: 14px;
    margin-right: 9px;
    flex: none;
}

.marks-type {
    width: 140px;
    height: 21px;
    margin: 5px 0 0 6px;
    border: 1px solid #ccc;
    display: flex;
    align-items: center;
    font-size: 11.500px;
    color: #777;
}

.type-ic {
    width: 12px;
    height: 14px;
    margin: 0 6px 0 11px;
}

.type-arrow {
    width: 18px;
    height: 100%;
    margin-left: auto;
    border-left: 1px solid #ccc;
    display: flex;
    align-items: center;
    justify-content: center;
}

.marks-grid {
    display: grid;
    grid-template-columns: 43px 42px 43px;
    grid-auto-rows: 42px;
    gap: 6px;
    margin: 6px 0 0 6px;
}

.mark-card {
    border: 1px solid #d4d4d4;
    display: flex;
    flex-direction: column;
    align-items: center;
    padding-top: 6px;
    font-size: 11.500px;
    color: #444;
}

.mark-card svg {
    width: 16px;
    height: 16px;
    margin-bottom: 2px;
}

.marks-pill-row {
    display: flex;
    align-items: center;
    margin: 9px 0 0 12px;
}

.pill-ic {
    width: 16px;
    height: 14px;
    margin-right: 3px;
}

.work {
    flex: 1;
    padding-right: 6px;
    display: flex;
    flex-direction: column;
    gap: 6px;
    min-width: 0;
}

.shelf {
    height: 28px;
    background-color: #fafafa;
    border: 1px solid #d4d4d4;
    display: flex;
    flex: none;
}

.shelf-label {
    width: 125px;
    display: flex;
    align-items: center;
    padding: 0 0 2px 6px;
    gap: 7px;
    color: #666;
    border-right: 1px solid #d4d4d4;
}

.shelf-label svg {
    width: 12px;
    height: 12px;
}

.shelf-pills {
    display: flex;
    align-items: center;
    padding-left: 2px;
    gap: 2px;
}

.pill {
    width: 148px;
    height: 20px;
    border-radius: 10px;
    padding-left: 11px;
    display: flex;
    align-items: center;
    color: #fff;
    font-size: 12px;
    letter-spacing: 0.2px;
}

.pill-green {
    background-color: #00b180;
}

.pill-blue {
    background-color: #4996b2;
}

.pill-small {
    width: 111px;
}

/* viz */
.viz {
    height: 518px;
    background-color: #0ff;
    border: 1px solid #d4d4d4;
    padding-left: 9px;
    flex: none;
}

.viz-title {
    height: 47px;
    margin: 0 0 0 -9px;
    padding-top: 13px;
    text-align: center;
    font-size: 20px;
    font-weight: 400;
    line-height: 24px;
    letter-spacing: 0.1px;
    color: #2d3a3c;
}

.viz-head {
    height: 16px;
}

.state {
    border-right: 1px solid #d4d4d4;
    text-align: right;
    padding-right: 6px;
    color: #6f8a8a;
    white-space: nowrap;
}

.head-state {
    width: 161px;
    height: 16px;
    line-height: 16px;
    color: #2d3a3c;
}

.viz-body {
    display: flex;
    height: 391px;
}

.rows {
    width: 947px;
    height: 391px;
    overflow: hidden;
    border-top: 1px solid #d4d4d4;
    border-bottom: 1px solid #d4d4d4;
    background-repeat: no-repeat;
    background-size: 1px 100%;
    background-image:
        linear-gradient(#fff, #fff), linear-gradient(#fff, #fff), linear-gradient(#fff, #fff),
        linear-gradient(#fff, #fff), linear-gradient(#fff, #fff), linear-gradient(#fff, #fff),
        repeating-linear-gradient(#fff 0 2px, transparent 2px 3px),
        linear-gradient(#fff, #fff), linear-gradient(#fff, #fff), linear-gradient(#fff, #fff);
    background-position: 170px 0, 212px 0, 254px 0, 296px 0, 338px 0, 380px 0, 553px 0, 759px 0, 835px 0, 910px 0;
}

.row {
    height: 20px;
    display: grid;
    grid-template-columns: 161px 262px 262px 262px;
    line-height: 20px;
}

.gen, .post {
    display: flex;
    align-items: center;
    white-space: nowrap;
    border-right: 1px solid #d4d4d4;
}

.gen {
    flex-direction: row-reverse;
}

.zero {
    text-align: center;
    color: #2f6060;
    border-right: 1px solid #d4d4d4;
    white-space: nowrap;
}

.bar {
    height: 15px;
    flex: none;
}

.bar-gen {
    background-color: #4b0082;
}

.bar-post {
    background-color: #000080;
}

.val {
    color: #0d2626;
    margin: 0 6px;
    letter-spacing: 0.4px;
}

.post .val {
    margin-left: 5px;
}

.viz-bar {
    width: 16px;
    height: 390px;
    margin-left: 4px;
}

.viz-bar .scroll-thumb {
    height: 199px;
}

.viz-axis {
    display: grid;
    grid-template-columns: 161px 262px 262px 262px;
    height: 54px;
}

.axis-blank, .axis-cell {
    border-right: 1px solid #d4d4d4;
    position: relative;
}

.axis-cell {
    background-repeat: no-repeat;
    background-size: 1px 5px;
}

.gen-axis {
    background-image:
        linear-gradient(#fff, #fff), linear-gradient(#fff, #fff), linear-gradient(#fff, #fff),
        linear-gradient(#fff, #fff), linear-gradient(#fff, #fff), linear-gradient(#fff, #fff);
    background-position: 9px 0, 51px 0, 93px 0, 135px 0, 177px 0, 219px 0;
}

.zero-axis {
    background-image: linear-gradient(#fff, #fff);
    background-position: 130px 0;
}

.post-axis {
    background-image: linear-gradient(#fff, #fff), linear-gradient(#fff, #fff), linear-gradient(#fff, #fff);
    background-position: 74px 0, 150px 0, 225px 0;
}

/* tick labels sit on the axis at their data value */
.axis-cell span {
    position: absolute;
    top: 6px;
    color: #6f8a8a;
    white-space: nowrap;
    letter-spacing: 0.1px;
}

.gen-axis span:nth-child(1) { left: 34px; }
.gen-axis span:nth-child(2) { left: 80px; }
.gen-axis span:nth-child(3) { left: 122px; }
.gen-axis span:nth-child(4) { left: 164px; }
.gen-axis span:nth-child(5) { left: 206px; }
.gen-axis span:nth-child(6) { left: 241px; }
.zero-axis span { left: 127px; }
.post-axis span:nth-child(1) { left: 1px; }
.post-axis span:nth-child(2) { left: 60px; }
.post-axis span:nth-child(3) { left: 136px; }
.post-axis span:nth-child(4) { left: 211px; }

.axis-cell b {
    position: absolute;
    left: 0;
    right: 0;
    top: 30px;
    text-align: center;
    font-weight: 400;
    color: #2c4a4a;
}

/* bottom bars */
.tabs {
    height: 30px;
    background-color: #e6e6e6;
    border-top: 1px solid #d0d0d0;
    border-bottom: 1px solid #d0d0d0;
    display: flex;
}

.tab {
    display: flex;
    align-items: center;
    justify-content: center;
    gap: 5px;
    padding-bottom: 2px;
    color: #666;
    border-right: 1px solid #ccc;
    white-space: nowrap;
    flex: none;
}

.tab svg {
    width: 12px;
    height: 12px;
    flex: none;
}

.tab-source {
    width: 130px;
    justify-content: flex-start;
    padding-left: 9px;
}

.tab-source svg {
    width: 10px;
    height: 14px;
}

.tab-on {
    background-color: #fff;
    font-weight: 700;
    color: #444;
}

.tab-add svg {
    width: 16px;
    height: 16px;
}

.w56 { width: 56px; }
.w57 { width: 57px; }
.w61 { width: 61px; }
.w63 { width: 63px; }
.w71 { width: 71px; }
.w103 { width: 103px; }

.status {
    height: 20px;
    background-color: #ececec;
    display: flex;
    align-items: center;
    font-size: 11px;
    color: #444;
}

.stat-marks {
    width: 73px;
    padding: 0 0 2px 3px;
}

.stat-rows {
    width: 127px;
    padding-bottom: 2px;
}

.stat-sum {
    padding-bottom: 2px;
}

.stat-cells {
    margin-left: auto;
    display: flex;
    height: 100%;
}

.cell {
    height: 100%;
    border-left: 1px solid #d4d4d4;
    display: flex;
    align-items: center;
    justify-content: center;
}

.c127 { width: 127px; }
.c27 { width: 27px; }
.c48 { width: 48px; }

.pager {
    width: 71px;
}

.pager svg {
    width: 52px;
    height: 10px;
}

.views {
    width: 67px;
}

.views svg {
    width: 56px;
    height: 14px;
}

.taskbar {
    height: 40px;
    background-color: #04151b;
    display: flex;
    flex: none;
}

.start {
    width: 48px;
    display: flex;
    align-items: center;
    justify-content: center;
}

.start svg {
    width: 16px;
    height: 16px;
}

.task-search {
    width: 343px;
    margin-right: 2px;
    background-color: #f3f3f3;
    display: flex;
    align-items: center;
    padding: 0 13px 0 9px;
    font-size: 14px;
    color: #222;
    font-family: "Roboto", sans-serif;
    letter-spacing: 0.35px;
}

.task-search span {
    padding-top: 2px;
}

.cortana {
    width: 22px;
    height: 22px;
    margin-right: 9px;
}

.mic {
    width: 12px;
    height: 18px;
    margin-left: auto;
}

.task-app {
    width: 49px;
    display: flex;
    align-items: center;
    justify-content: center;
    flex: none;
}

.task-app svg {
    width: 24px;
    height: 24px;
}

.task-app .taskview {
    width: 19px;
    height: 19px;
}

.task-on {
    background-color: #2e3e44;
}

.underline {
    box-shadow: inset 0 -2px 0 #76b9ed;
}

.h-icon {
    width: 18px;
    height: 18px;
    background-color: #3a3a3a;
    color: #eee;
    text-align: center;
    line-height: 18px;
    font-size: 11px;
}

.chrome-two {
    margin-left: 2px;
    width: 45px;
}

.chrome-two svg {
    width: 28px;
    height: 28px;
}

.tray {
    margin-left: auto;
    display: flex;
    align-items: center;
    color: #fff;
}

.tray-person {
    width: 18px;
    height: 18px;
    margin-right: 20px;
}

.tray-caret {
    width: 12px;
    height: 8px;
    margin-right: 10px;
}

.tray-batt {
    width: 16px;
    height: 10px;
    margin-right: 10px;
}

.tray-lang {
    margin-right: 9px;
}

.clock {
    display: flex;
    flex-direction: column;
    align-items: center;
    width: 64px;
    line-height: 19px;
    font-family: "Roboto", sans-serif;
}

.notify {
    width: 56px;
    padding-left: 15px;
    position: relative;
}

.notify svg {
    width: 16px;
    height: 16px;
}

.notify-badge {
    position: absolute;
    left: 23px;
    top: 8px;
    width: 16px;
    height: 16px;
    border-radius: 50%;
    background-color: #333;
    border: 1px solid #aaa;
    text-align: center;
    line-height: 14px;
    font-size: 11px;
    font-weight: 700;
}
```
